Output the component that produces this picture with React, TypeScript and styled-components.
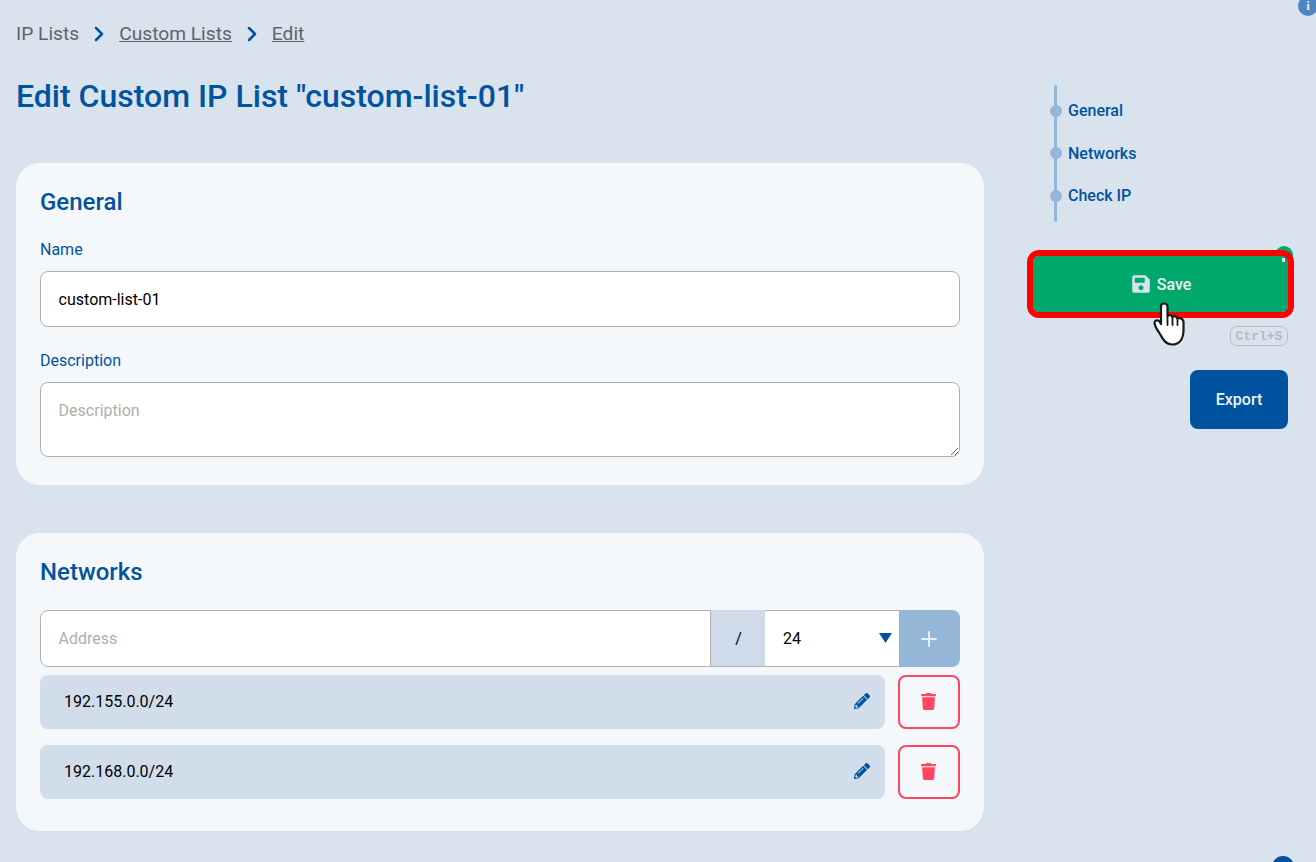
import React from 'react';
import styled, { createGlobalStyle } from 'styled-components';
import { FaSave, FaPencilAlt, FaTrash } from 'react-icons/fa';
import { ChevronRight, Plus } from 'lucide-react';

const Global = createGlobalStyle`
  html, body { margin: 0; padding: 0; height: 862px; overflow: hidden; background: #d9e3ee; }
  * { box-sizing: border-box; }
  body { font-family: Roboto, "Liberation Sans", sans-serif; }
`;

const Page = styled.div`
  position: relative;
  width: 1316px;
  height: 862px;
  overflow: hidden;
  padding-left: 16px;
  display: grid;
  grid-template-columns: 968px 255px;
  column-gap: 49px;
  align-items: start;
`;
const Main = styled.main`
  display: flex;
  flex-direction: column;
  padding-top: 23px;
`;
const Crumbs = styled.nav`
  display: flex;
  align-items: center;
  height: 22px;
  font-size: 19.2px;
  line-height: 22px;
  color: #5f6368;
  svg { color: #00539f; margin: 0 8px; }
`;
const CrumbLink = styled.a`
  color: #5f6368;
  text-decoration: underline;
`;
const Title = styled.h1`
  margin: 32px 0 48px;
  font-size: 32px;
  line-height: 38px;
  font-weight: 500;
  color: #00539f;
`;
const Card = styled.section`
  background: #f5f8fb;
  border-radius: 24px;
  padding: 25px 24px 24px;
  display: flex;
  flex-direction: column;
  margin-bottom: 48px;
`;
const CardTitle = styled.h2`
  margin: 0 0 24px;
  font-size: 24px;
  line-height: 28px;
  font-weight: 500;
  color: #00539f;
`;
const Label = styled.label`
  font-size: 16px;
  line-height: 19px;
  color: #00539f;
  margin-bottom: 12px;
`;
const TextInput = styled.input`
  height: 56px;
  width: 100%;
  border: 1px solid #b0b0b0;
  border-radius: 8px;
  background: #fff;
  padding: 0 17.6px;
  font: 400 16px Roboto, sans-serif;
  color: #000;
  margin-bottom: 24px;
  outline: none;
  &::placeholder { color: #b0aea9; opacity: 1; }
`;
const TextArea = styled.textarea`
  display: block;
  height: 75px;
  width: 100%;
  border: 1px solid #b0b0b0;
  border-radius: 8px;
  background: #fff;
  padding: 18px 17.6px;
  font: 400 16px/19px Roboto, sans-serif;
  outline: none;
  margin-bottom: 4px;
  &::placeholder { color: #b0aea9; opacity: 1; }
`;
const AddRow = styled.div`
  display: flex;
  height: 57px;
  margin-bottom: 8px;
`;
const Address = styled.input`
  flex: 1;
  min-width: 0;
  border: 1px solid #b0b0b0;
  border-radius: 8px 0 0 8px;
  background: #fff;
  padding: 0 17.6px;
  font: 400 16px Roboto, sans-serif;
  outline: none;
  &::placeholder { color: #b0aea9; opacity: 1; }
`;
const Slash = styled.div`
  width: 54px;
  background: #cfdbeb;
  border-bottom: 1px solid #b0b0b0;
  display: flex;
  align-items: center;
  justify-content: center;
  padding-left: 1px;
  font-size: 16px;
  color: #000;
`;
const SelectWrap = styled.div`
  position: relative;
  width: 134px;
  background: #fff;
  border-top: 1px solid #b0b0b0;
  border-bottom: 1px solid #b0b0b0;
  display: flex;
  align-items: center;
  padding-left: 18px;
  font-size: 16px;
  color: #000;
`;
const Caret = styled.svg`
  position: absolute;
  right: 7px;
  top: 22px;
`;
const AddButton = styled.button`
  width: 61px;
  border: 0;
  border-radius: 0 8px 8px 0;
  background: #94b6d7;
  color: #e6eef6;
  display: flex;
  align-items: center;
  justify-content: center;
  padding: 0 1px 0 0;
`;
const NetRow = styled.div`
  display: flex;
  gap: 13px;
  height: 54px;
  margin-bottom: 16px;
  &:last-child { margin-bottom: 8px; }
`;
const NetValue = styled.div`
  flex: 1;
  background: #d2ddec;
  border-radius: 8px;
  display: flex;
  align-items: center;
  justify-content: space-between;
  padding: 0 15px 2px 24px;
  font-size: 16px;
  color: #000;
  svg { color: #00539f; }
`;
const DeleteButton = styled.button`
  width: 62px;
  border: 2px solid #ff4560;
  border-radius: 8px;
  background: transparent;
  color: #ff4560;
  display: flex;
  align-items: center;
  justify-content: center;
  padding: 0 1px 2px 0;
`;
const Side = styled.aside`
  display: flex;
  flex-direction: column;
  align-items: flex-end;
  padding-top: 85px;
`;
const Steps = styled.ol`
  position: relative;
  align-self: flex-start;
  list-style: none;
  margin: 0 0 34px 22px;
  padding: 4px 0 5px 13px;
  height: 137px;
  display: flex;
  flex-direction: column;
  justify-content: flex-start;
  &::before {
    content: '';
    position: absolute;
    left: -1px;
    top: 0;
    bottom: 0;
    width: 3px;
    border-radius: 2px;
    background: #94b6d7;
  }
`;
const Step = styled.li`
  position: relative;
  height: 43.4px;
  display: flex;
  align-items: center;
  font-size: 16px;
  font-weight: 500;
  color: #00539f;
  &::before {
    content: '';
    position: absolute;
    left: -18px;
    top: 15.6px;
    width: 12px;
    height: 12px;
    border-radius: 50%;
    background: #94b6d7;
  }
`;
const SaveWrap = styled.div`
  position: relative;
  width: 255px;
  margin-bottom: 14px;
`;
const SaveDot = styled.span`
  position: absolute;
  top: -10px;
  right: -5px;
  width: 18px;
  height: 18px;
  border-radius: 50%;
  background: #00a96b;
`;
const SaveButton = styled.button`
  position: relative;
  width: 100%;
  height: 56px;
  border: 0;
  border-radius: 6px;
  background: #00a96b;
  outline: 6px solid #ff0000;
  color: #eef3f8;
  font: 500 16px Roboto, sans-serif;
  display: flex;
  align-items: center;
  justify-content: center;
  gap: 6px;
  padding: 0 0 0 1px;
  svg { color: #d9e3ee; }
`;
const Pin = styled.span`
  position: absolute;
  top: 2px;
  right: 3px;
  width: 3px;
  height: 4px;
  background: #d9e3ee;
`;
const Hand = styled.svg`
  position: absolute;
  left: 120px;
  top: 46px;
`;
const Kbd = styled.kbd`
  height: 20px;
  width: 58px;
  border: 1px solid #b9bec4;
  border-radius: 7px;
  font: 700 13px/20px "Liberation Mono", "DejaVu Sans Mono", monospace;
  color: #b4b9bf;
  text-align: center;
  margin-bottom: 24px;
`;
const ExportButton = styled.button`
  width: 98px;
  height: 59px;
  border: 0;
  border-radius: 8px;
  background: #00539f;
  color: #eef3f8;
  font: 500 16px Roboto, sans-serif;
`;
const InfoBadge = styled.span<{ $top: number; $left: number; $size: number; $bg: string }>`
  position: absolute;
  top: ${p => p.$top}px;
  left: ${p => p.$left}px;
  width: ${p => p.$size}px;
  height: ${p => p.$size}px;
  border-radius: 50%;
  background: ${p => p.$bg};
  color: #e6eef6;
  font: 700 13px/12px "Liberation Serif", serif;
  display: flex;
  align-items: flex-end;
  justify-content: center;
  padding-bottom: 4px;
`;

export default function App() {
  return (
    <Page>
      <Global />
      <Main>
        <Crumbs>
          IP Lists
          <ChevronRight size={24} strokeWidth={2.5} />
          <CrumbLink>Custom Lists</CrumbLink>
          <ChevronRight size={24} strokeWidth={2.5} />
          <CrumbLink>Edit</CrumbLink>
        </Crumbs>
        <Title>Edit Custom IP List "custom-list-01"</Title>
        <Card>
          <CardTitle>General</CardTitle>
          <Label>Name</Label>
          <TextInput defaultValue="custom-list-01" />
          <Label>Description</Label>
          <TextArea placeholder="Description" />
        </Card>
        <Card>
          <CardTitle>Networks</CardTitle>
          <AddRow>
            <Address placeholder="Address" />
            <Slash>/</Slash>
            <SelectWrap>
              24
              <Caret width="13" height="10" viewBox="0 0 13 10">
                <path d="M0 0h13L6.500 10z" fill="#00539f" />
              </Caret>
            </SelectWrap>
            <AddButton><Plus size={24} strokeWidth={2} /></AddButton>
          </AddRow>
          <NetRow>
            <NetValue>192.155.0.0/24<FaPencilAlt size={16} /></NetValue>
            <DeleteButton><FaTrash size={17} /></DeleteButton>
          </NetRow>
          <NetRow>
            <NetValue>192.168.0.0/24<FaPencilAlt size={16} /></NetValue>
            <DeleteButton><FaTrash size={17} /></DeleteButton>
          </NetRow>
        </Card>
      </Main>
      <Side>
        <Steps>
          <Step>General</Step>
          <Step>Networks</Step>
          <Step>Check IP</Step>
        </Steps>
        <SaveWrap>
          <SaveDot />
          <SaveButton>
            <FaSave size={20} />
            Save
            <Pin />
          </SaveButton>
          <Hand width="32" height="44" viewBox="0 0 32 44">
            <path
              d="M8 4.500C8 2.500 9.500 1.500 11 1.500S14.500 2.500 14.500 4.500V14C15.500 12.800 18.500 12.800 19.500 15C20.500 13.800 23.500 14 24.500 16.500C25.500 15.500 30 16 30.500 20V28C30.500 36 27 42.500 19 42.500C13 42.500 10 38 7 32C5 29 2 25 1.500 21C1.500 18.500 4 17.500 6 19L8 22Z"
              fill="#fff"
              stroke="#1a1a1a"
              strokeWidth="2.200"
              strokeLinejoin="round"
            />
            <path d="M14.500 14V23M19.500 15V23M24.500 16.500V23" stroke="#1a1a1a" strokeWidth="1.800" strokeLinecap="round" fill="none" />
          </Hand>
        </SaveWrap>
        <Kbd>Ctrl+S</Kbd>
        <ExportButton>Export</ExportButton>
      </Side>
      <InfoBadge $top={-4} $left={1298} $size={20} $bg="#4c87c0">i</InfoBadge>
      <InfoBadge $top={856} $left={1272} $size={22} $bg="#00539f" />
    </Page>
  );
}
